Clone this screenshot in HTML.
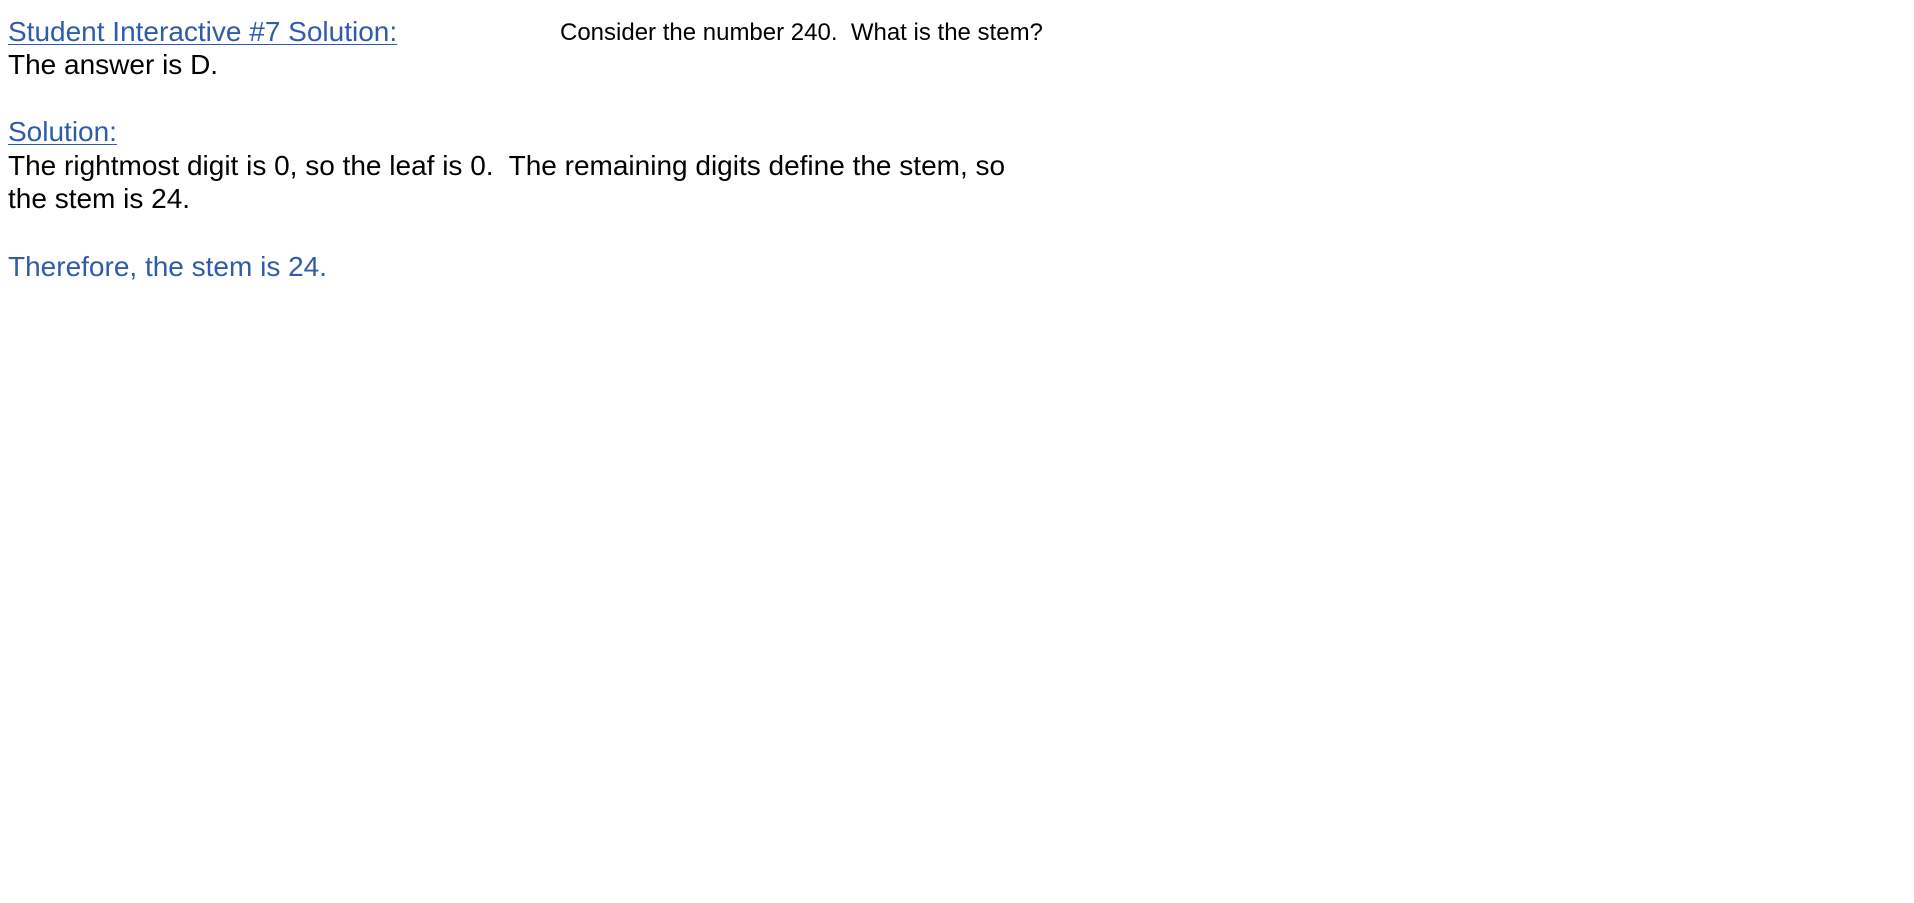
<!DOCTYPE html>
<html><head><meta charset="utf-8"><style>
html,body{margin:0;padding:0;background:#fff;width:1914px;height:903px;overflow:hidden}
body{font-family:"Liberation Sans",Arial,sans-serif;font-size:28px;line-height:33.6px;color:#000}
#main{position:absolute;left:8px;top:14.5px;white-space:nowrap}
.b{color:#2e5caa}
.u{text-decoration:underline;text-decoration-thickness:1px;text-underline-offset:3px}
#q{position:absolute;left:560px;top:19px;font-size:24px;line-height:28px;white-space:pre}
</style></head><body>
<div id="main">
<div class="b u">Student Interactive #7 Solution:</div>
<div>The answer is D.</div>
<div>&nbsp;</div>
<div class="b u">Solution:</div>
<div>The rightmost digit is 0, so the leaf is 0.&nbsp; The remaining digits define the stem, so<br>the stem is 24.</div>
<div>&nbsp;</div>
<div class="b">Therefore, the stem is 24.</div>
</div>
<div id="q">Consider the number 240.  What is the stem?</div>
</body></html>
